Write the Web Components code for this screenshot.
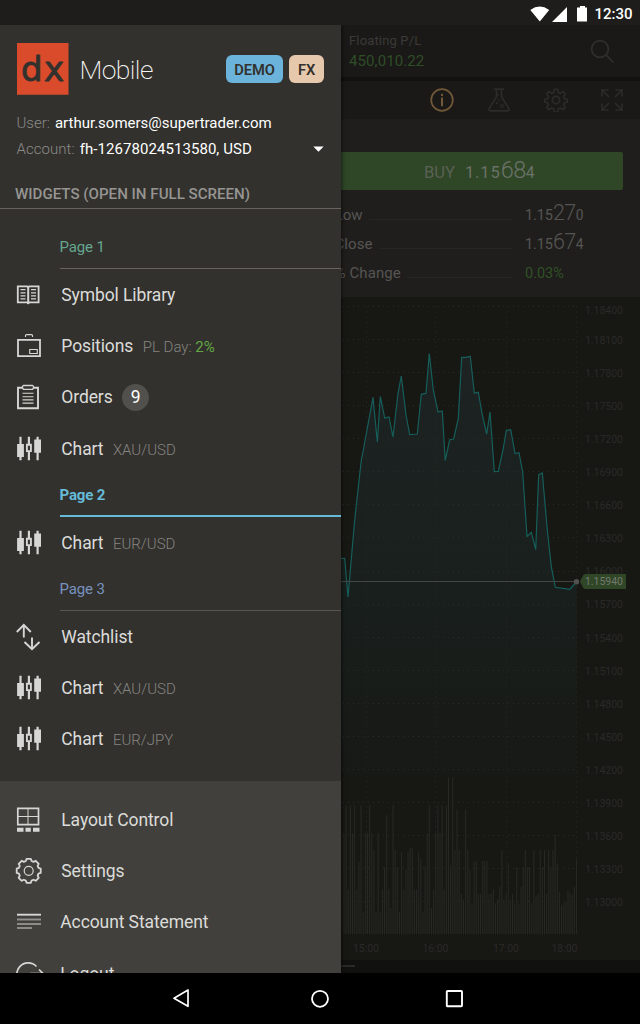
<!DOCTYPE html>
<html lang="en">
<head>
<meta charset="utf-8">
<title>dx Mobile</title>
<style>
html,body{margin:0;background:#000}
body{font-family:Roboto,"Liberation Sans",sans-serif;width:640px;height:1024px;overflow:hidden}
</style>
</head>
<body>
<trader-app></trader-app>
<script>
const define = (name, html, init) => customElements.define(name, class extends HTMLElement {
  constructor() {
    super();
    this.attachShadow({mode: 'open'});
  }
  connectedCallback() {
    this.shadowRoot.innerHTML = typeof html === 'function' ? html(this) : html;
    if (init) init(this);
  }
});

/* gear outline: alternating outer and inner radii, smoothed by round joins */
const gear = (cx, cy, n, ro, ri) => {
  let d = '';
  for (let i = 0; i < n; i++) {
    const a = i * 2 * Math.PI / n - Math.PI / 2, s = Math.PI / n;
    [[-.45, ro], [.45, ro], [.72, ri], [1.28, ri]].forEach(([f, r], k) => {
      d += (i || k ? 'L' : 'M') + (cx + r * Math.cos(a + f * s)).toFixed(2) + ' ' + (cy + r * Math.sin(a + f * s)).toFixed(2);
    });
  }
  return d + 'Z';
};

const icons = {
  book: `<path d="M1.8 4.3h9.4l1 .9 1-.9h9.4v16h-9.4l-1 1-1-1H1.8z" stroke-width="1.8"/><path d="M12.2 5v17" stroke-width="2"/><path d="M4.5 7.7h5M4.5 10.8h5M4.5 13.8h5M4.5 16.8h5M15 7.7h5M15 10.8h5M15 13.8h5M15 16.8h5" stroke-width="1.2"/>`,
  case: `<path d="M2 6.8h22v16.4H2z" stroke-width="1.8"/><path d="M9.5 4V2.6q0-1 1-1h5q1 0 1 1V4" stroke-width="1.1"/><path d="M13.7 16.5h7.6v4h-7.6z" stroke-width="1.1"/>`,
  clip: `<path d="M6 3.8H2v20.4h20V3.8h-4" stroke-width="1.9"/><path d="M7.5 1.5h9l1 1v1.8l-1 1h-9l-1-1V2.500z" stroke-width="1.3"/><path d="M6.500 9.300h11M6.500 12.700h11M6.500 15.900h11M6.500 19.100h11" stroke-width="1.1"/>`,
  candles: `<path d="M4.500 .7v23.600M12.900 .7v23.600M21.600 .7v23.600" stroke-width="2.200"/><path d="M1.100 8h6.800v13H1.100zM18.200 3.500H25v13.200h-6.800z" fill="currentColor" stroke="none"/><path d="M10.900 8.700h4v6.400h-4z" fill="#32312d" stroke-width="1.900"/>`,
  arrows: `<path d="M.8 8 7.800 .8l7 7.200M7.800 1.500V13.500M8.500 18l7.500 7.200 7.500-7.200M16 13.500v11" stroke-width="1.900"/>`,
  layout: `<path d="M1.800 1.300h20.700v16.400H1.800z" stroke-width="1.700"/><path d="M12 1v17M1 9.500h22" stroke-width="1"/><path d="M1 20.800h6.500v4H1zM9.500 20.800h5.300v4H9.500zM17 20.800h6.500v4H17z" fill="currentColor" stroke="none"/>`,
  gear: `<path d="${gear(12.7, 12.8, 8, 12.2, 10.2)}" stroke-width="1.800" stroke-linejoin="round"/><circle cx="12.700" cy="12.800" r="4.500" stroke-width="1.200"/>`,
  lines: `<path d="M1 5.700h24" stroke-width="1.900"/><path d="M1 10.500h24" stroke-width="1.900" opacity=".55"/><path d="M1 15h24M1 19h15" stroke-width="1.100"/>`,
  logout: `<path d="M20.500 5.500A11.500 11.500 0 1 0 22 19.500M14 12.500h13M23 8.500l4 4-4 4" stroke-width="1.700"/>`
};

define('ui-icon', el => `<style>
:host{display:block;width:28px;height:26px;color:#d6d6d4;flex:none}
svg{display:block;overflow:visible}
</style><svg width="28" height="26" viewBox="0 0 28 26" fill="none" stroke="currentColor">${icons[el.getAttribute('name')]}</svg>`);

define('status-bar', `<style>
:host{display:flex;height:25px;background:#1e1d1b;align-items:center;justify-content:flex-end;padding-right:7.500px;color:#fff;font-size:15px;font-weight:500;letter-spacing:0}
svg{display:block;margin-right:6px}
span{line-height:25px;padding-top:3px}
</style>
<svg width="58" height="18" viewBox="0 0 58 18" fill="#fff"><path d="M.3 6Q9.700-.8 19.200 6L9.800 17.500zM22 18 37 3v15zM47 3.500h3V2h5v1.500h2V17.500H47z"/></svg>
<span>12:30</span>`);

define('nav-bar', `<style>
:host{display:flex;height:51px;background:#000;align-items:center;justify-content:center;gap:115px}
svg{display:block;overflow:visible}
</style>
<svg width="20" height="20" viewBox="0 0 20 20" fill="none" stroke="#fff" stroke-width="1.700" stroke-linejoin="round"><path d="M13 1v16.300L-1 9.200z"/></svg>
<svg width="20" height="20" viewBox="0 0 20 20" fill="none" stroke="#fff" stroke-width="1.800"><circle cx="10" cy="9.800" r="8"/></svg>
<svg width="20" height="20" viewBox="0 0 20 20" fill="none" stroke="#fff" stroke-width="1.900"><rect x="1.800" y="2" width="15.200" height="15.200" rx=".8"/></svg>`);

define('account-badge', `<style>
:host{display:flex;align-items:center;justify-content:center;height:28px;border-radius:6px;background:var(--badge);color:#32312d;font-size:14.700px;font-weight:600;box-sizing:border-box;padding-top:1px;letter-spacing:-.1px}
</style><slot></slot>`);

define('drawer-header', `<style>
:host{display:block;flex:none;height:183px;border-bottom:1px solid #696360}
.brand{display:flex;align-items:center;padding:17px 17px 0;height:52px}
.logo{display:block;flex:none;position:relative;top:.5px}
.name{font-size:26.500px;font-weight:200;color:#f6f6f4;margin-left:10.500px;flex:1;line-height:52px;padding-top:3px;letter-spacing:-.6px}
account-badge{position:relative;top:1px}
account-badge+account-badge{margin-left:6px}
.row{display:flex;align-items:center;padding:0 17px 0 16.500px;height:26px;font-size:15px;color:#fff}
.row i{font-style:normal;font-weight:300;color:#8b8a88;margin-right:5px}
.row.wide{letter-spacing:.06px}
.row svg{margin-left:auto;position:relative;top:.5px}
.info{padding-top:15.500px}
h2{margin:20px 0 0 15px;font-size:15.100px;font-weight:500;color:#969592;line-height:25px}
</style>
<div class="brand">
<svg class="logo" width="52" height="52" viewBox="0 0 52 52"><path d="M0 0h51.500v51.700H0z" fill="#da4b2c"/><text x="4" y="37.800" textLength="43" font-family="DejaVu Sans" font-size="34" font-weight="400" fill="#32312d" stroke="#32312d" stroke-width=".9" stroke-linejoin="round">dx</text></svg>
<span class="name">Mobile</span>
<account-badge style="--badge:#6bb3da;width:57px">DEMO</account-badge><account-badge style="--badge:#e6c8ac;width:35px">FX</account-badge>
</div>
<div class="info">
<div class="row"><i>User:</i><span>arthur.somers@supertrader.com</span></div>
<div class="row wide"><i>Account:</i><span>fh-12678024513580, USD</span><svg width="11" height="6" viewBox="0 0 11 6"><path d="M.3.500h10.400L5.500 5.800z" fill="#fff"/></svg></div>
</div>
<h2>WIDGETS (OPEN IN FULL SCREEN)</h2>`);

define('page-label', el => `<style>
:host{display:flex;align-items:center;height:${el.hasAttribute('active') ? 43.4 : 42}px;box-sizing:border-box;margin-left:59.500px;font-size:15px;letter-spacing:-.15px;color:var(--ink);border-bottom:${el.hasAttribute('active') ? '2px solid #65bbd8' : '1px solid var(--rule,#565552)'};font-weight:${el.hasAttribute('active') ? 700 : 400}}
</style><slot></slot>`);

define('drawer-item', el => `<style>
:host{display:flex;align-items:center;height:51.350px;box-sizing:border-box;padding:.700px 0 0 16px;font-size:17.500px;letter-spacing:-.1px;color:#dcdcda}
.text{display:flex;align-items:baseline;margin-left:calc(17.300px - var(--shift,0px));white-space:nowrap}
::slotted(*){margin-left:9.500px}
</style><ui-icon name="${el.getAttribute('icon')}"></ui-icon><div class="text"><span>${el.getAttribute('label')}</span><slot></slot></div>`);

define('item-note', `<style>
:host{font-size:15px;font-weight:300;color:#858481;letter-spacing:0}
::slotted(b){font-weight:400;color:#62a745}
</style><slot></slot>`);

define('count-badge', `<style>
:host{display:flex;width:27px;height:27px;border-radius:50%;background:#51504d;color:#fff;align-items:center;justify-content:center;font-size:17.500px}
</style><slot></slot>`);

define('app-drawer', `<style>
:host{display:flex;flex-direction:column;width:341px;height:948px;overflow:hidden;background:#32312d;box-shadow:1px 0 4px #0008}
.pages{padding-top:17px;height:554.500px;flex:none}
.tools{background:#41403c;padding-top:13.200px;flex:1}
page-label.first{height:42.500px}
</style>
<drawer-header></drawer-header>
<div class="pages">
<page-label class="first" style="--ink:#66a68f;--rule:#696360">Page 1</page-label>
<drawer-item icon="book" label="Symbol Library"></drawer-item>
<drawer-item icon="case" label="Positions"><item-note>PL Day: <b>2%</b></item-note></drawer-item>
<drawer-item icon="clip" label="Orders"><count-badge>9</count-badge></drawer-item>
<drawer-item icon="candles" label="Chart"><item-note>XAU/USD</item-note></drawer-item>
<page-label active style="--ink:#65bbd8">Page 2</page-label>
<drawer-item icon="candles" label="Chart"><item-note>EUR/USD</item-note></drawer-item>
<page-label style="--ink:#7892bf">Page 3</page-label>
<drawer-item icon="arrows" label="Watchlist"></drawer-item>
<drawer-item icon="candles" label="Chart"><item-note>XAU/USD</item-note></drawer-item>
<drawer-item icon="candles" label="Chart"><item-note>EUR/JPY</item-note></drawer-item>
</div>
<div class="tools">
<drawer-item icon="layout" label="Layout Control"></drawer-item>
<drawer-item icon="gear" label="Settings"></drawer-item>
<drawer-item icon="lines" label="Account Statement" style="--shift:1px"></drawer-item>
<drawer-item icon="logout" label="Logout" style="--shift:1px"></drawer-item>
</div>`);

define('top-panel', `<style>
:host{display:block;background:#1a1917}
.pl{display:flex;justify-content:space-between;height:52px;padding:0 25px 0 349px;border-bottom:4px solid #11110f}
.pl div{padding-top:6px;font-size:13px;line-height:19px;color:#3b3a38;letter-spacing:.15px}
.pl b{display:block;font-weight:400;font-size:15px;line-height:22px;color:#2f4d27;letter-spacing:.1px}
.tools{display:flex;height:38px;justify-content:flex-end;align-items:center;gap:32.300px;padding-right:16.200px}
svg{display:block;fill:none;stroke:#2c2b29;stroke-width:1.700}
.pl svg{margin-top:14px}
</style>
<div class="pl"><div>Floating P/L<b>450,010.22</b></div><svg width="25" height="25" viewBox="0 0 25 25" style="stroke:#302f2d"><circle cx="10" cy="10" r="8.400"/><path d="m15.800 15.800 7.700 7.500"/></svg></div>
<div class="tools">
<svg width="24" height="24" viewBox="0 0 24 24" style="stroke:#715838;margin-right:.500px"><circle cx="12" cy="12" r="10.800"/><path d="M12 9.500v8.700M12 5.800v2.100" stroke-width="2"/></svg>
<svg width="24" height="24" viewBox="0 0 24 24" stroke-linejoin="round"><path d="M7 1.200h10M9.500 1.500v7.300L2.200 20.500q-1 2.300 1 2.300h17.600q2 0 1-2.300L14.500 8.800V1.500M9.500 7h2"/><circle cx="15" cy="18" r="1.500" stroke-width="1.100"/><circle cx="10" cy="15" r=".7" stroke-width="1"/><circle cx="12" cy="12" r=".5" stroke-width="1"/></svg>
<svg width="24" height="24" viewBox="0 0 24 24" stroke-linejoin="round"><path d="M10.300 1h3.400l.8 3.400 2 .9 3-1.900 2.300 2.500-1.900 2.900.8 2.100 3.300.7v2.800l-3.300.8-.8 2 1.900 3-2.300 2.400-3-1.900-2 .8-.8 3.500h-3.400l-.8-3.500-2-.8-3 1.900-2.300-2.400 1.900-3-.8-2L.2 14.400v-2.800l3.100-.7.8-2.100-1.900-2.900 2.300-2.500 3 1.900 2-.9z" transform="translate(.6 .3) scale(.95)"/><circle cx="12" cy="12" r="3.700"/></svg>
<svg width="24" height="24" viewBox="0 0 24 24"><path d="M2 8.500V2h6.500M2 2l7 7M15.500 2H22v6.500M22 2l-7 7M2 15.500V22h6.500M2 22l7-7M22 15.500V22h-6.500M22 22l-7-7"/></svg>
</div>`);

define('price-value', el => {
  const [a, b, c] = el.getAttribute('parts').split('|');
  return `<style>
:host{display:inline-flex;align-items:baseline;white-space:pre}
span{letter-spacing:var(--gap,-.1px)}
b{font-weight:300;font-size:var(--big,21.500px);letter-spacing:-.5px;margin-left:var(--lead,0)}
span:last-child{font-size:.95em}
</style><span>${a}</span><b>${b}</b><span>${c}</span>`;
});

define('quote-row', el => `<style>
:host{display:flex;align-items:baseline;height:29px;line-height:28px;font-size:15px;color:#565553;padding:0 57px 0 334.500px}
.rule{flex:1;border-bottom:1px solid #272624;margin:0 8px 0 6px}
.v{width:58px;text-align:left;margin-left:5.500px;font-size:14.500px;white-space:nowrap}
label{letter-spacing:.1px}
</style><label>${el.getAttribute('label')}</label><i class="rule"></i><span class="v"><slot></slot></span>`);

define('quote-panel', `<style>
:host{display:block;height:178px;background:#1f1e1c}
.buy{display:flex;align-items:baseline;height:38px;line-height:36.500px;margin:0 17px 0 0;background:#2f4627;border-radius:2px;color:#5a6154;font-size:16.500px;padding-left:424px;--gap:.9px;--big:23.500px;--lead:0px}
.buy price-value{margin-left:10px;color:#6b7267}
.pad{height:33px}
.rows{padding-top:9px}
.up{color:#305226}
quote-row:last-child{position:relative;top:1.500px}
</style>
<div class="pad"></div>
<div class="buy">BUY <price-value parts="1.15|68|4"></price-value></div>
<div class="rows">
<quote-row label="Low"><price-value parts="1.15|27|0"></price-value></quote-row>
<quote-row label="Close"><price-value parts="1.15|67|4"></price-value></quote-row>
<quote-row label="% Change"><span class="up">0.03%</span></quote-row>
</div>`);

const priceLine = [[341,558.300],[344.700,558.300],[348,597],[354.700,520],[361.300,460],[363.300,450],[373,397.300],[377.300,442],[380.300,396.500],[384.700,418],[389,417],[393,437],[398,393.300],[401.300,376],[406,415],[409.700,434.500],[417.300,434],[421.300,394.300],[426,393.300],[429.300,353.500],[433.300,390],[438,412],[442.300,411],[445.200,460.500],[449.700,439.700],[453.700,439],[458.300,418.300],[461.700,357.300],[466,357.300],[470.300,356.300],[474.300,393],[478.300,392.300],[482.300,415],[486.700,434],[490,412],[494.300,471.500],[498.300,471.300],[503,450],[506.300,430.300],[510.700,429.700],[515,453.500],[519,452.700],[522.700,472],[527,536.500],[531.300,532.300],[535.700,549.700],[538.700,474.700],[542.300,473],[547.300,530],[551.300,566.700],[555.300,587.300],[569.700,589.300],[576.500,582]];
const volume = [220,136,388,136,220,136,388,306,136,457,220,220,136,220,270,457,220,457,388,322,165,388,444,136,270,322,457,277,388,328,277,265,265,388,388,277,297,457,319,220,136,444,388,220,136,220,136,388,136,52,316,52,270,148,270,402,418,148,270,330,430,306,303,402,402,303,303,303,402,402,388,430,418,381,270,418,402,310,418,402,430,322,430,381,322,270,322,322,430,270,408,402,270,322,270,402,270,322,270,225,310,395,436,430,424,391,399,405,381,297];

define('price-chart', () => {
  let grid = '', labels = '', bars = '';
  for (let i = 0; i < 19; i++) {
    const y = 306.500 + i * 33.070;
    grid += `<path d="M338 ${Math.round(y - .5) + .5}H577"/>`;
    const ly = (i ? y + .3 : 310) + 4;
    labels += `<text x="585" y="${ly.toFixed(1)}" textLength="38">${(1.184 - i * .003).toFixed(5)}</text>`;
  }
  [366.500, 435.500, 506.500, 576.500].forEach(x => grid += `<path d="M${x} 306.500V937"/>`);
  volume.forEach((v, i) => {
    const x = 344 + i * 2.133, y = 760 + v / 3;
    bars += `<path d="M${x.toFixed(2)} ${y.toFixed(1)}V934"/>`;
  });
  const pts = priceLine.map(p => p.join(' ')).join('L');
  return `<style>
:host{display:block;height:663px;background:#171714}
svg{display:block}
text{font-family:Roboto,"Liberation Sans",sans-serif;font-size:10.500px;fill:#2b2a28}
</style>
<svg width="640" height="663" viewBox="0 297 640 663">
<defs><linearGradient id="g" x1="0" y1="353" x2="0" y2="775" gradientUnits="userSpaceOnUse"><stop stop-color="#1c2322"/><stop offset=".5" stop-color="#19201e"/><stop offset="1" stop-color="#171916"/></linearGradient></defs>
<path d="M${pts}V775H341Z" fill="url(#g)"/>
<g fill="none" stroke="#292926" stroke-width="1" stroke-dasharray="1 4">${grid}</g>
<g stroke="#272723" stroke-width="1.100">${bars}</g>
<path d="M${pts}" fill="none" stroke="#165e5a" stroke-width="1.200"/>
<path d="M338 581.500H577" stroke="#444542" stroke-width="1.200"/><circle cx="576.500" cy="581.800" r="2.700" fill="#51524f"/>
${labels}
<path d="M580 581.500l3-6q.8-1.500 2-1.500h41v15h-41q-1.200 0-2-1.500z" fill="#2f4627"/>
<text x="585" y="585.300" textLength="38" style="fill:#74796f">1.15940</text>
<text x="353" y="951.500" textLength="26">15:00</text><text x="422.500" y="951.500" textLength="26">16:00</text><text x="493" y="951.500" textLength="26">17:00</text><text x="551.500" y="951.500" textLength="26">18:00</text>
</svg>`;
});

define('trade-screen', `<style>
:host{display:block;height:948px;overflow:hidden;background:#11110f}
.pager{height:13px;display:flex;padding:5px 0 0 320px;box-sizing:border-box}
.pager i{width:35px;height:2px;background:#292927}
</style>
<top-panel></top-panel><quote-panel></quote-panel><price-chart></price-chart><div class="pager"><i></i></div>`);

define('trader-app', `<style>
:host{display:grid;grid-template-rows:25px 948px 51px;width:640px;height:1024px}
main{position:relative;overflow:hidden}
app-drawer{position:absolute;left:0;top:0}
</style>
<status-bar></status-bar>
<main><trade-screen></trade-screen><app-drawer></app-drawer></main>
<nav-bar></nav-bar>`);
</script>
</body>
</html>
